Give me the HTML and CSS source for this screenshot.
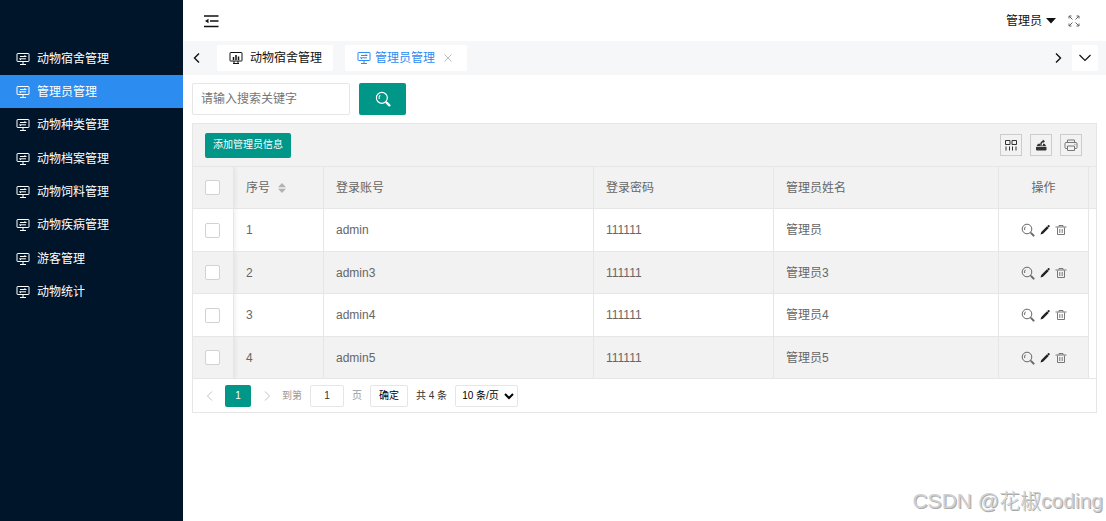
FILE: index.html
```
<!DOCTYPE html>
<html lang="zh-CN">
<head>
<meta charset="utf-8">
<title>管理员管理</title>
<meta name="viewport" content="width=device-width, initial-scale=1">
<link rel="stylesheet" href="styles.css">
</head>
<body>
<svg class="sprite" aria-hidden="true">
  <symbol id="i-screen" viewBox="0 0 14 14"><path d="M1.5 1.500h11q.5 0 .5.5v7q0 .5-.5.5h-11Q1 9.500 1 9V2q0-.5.5-.5zM7 9.500v3M4 12.500h6M4 4.500h6.500M3.500 6.800H10M8.500 3.500l1.500 1M5 8l-1.500-1.200"/></symbol>
  <symbol id="i-chart" viewBox="0 0 14 14"><path d="M1.500 1.500h11q.5 0 .5.5v7.500q0 .5-.5.5h-11Q1 10 1 9.500V2q0-.5.5-.5zM4 12.500h6M5 10v2M9 10v2"/><path d="M4.500 6v3M7 4v5M9.500 5.500v3.500" stroke-width="1.500"/></symbol>
  <symbol id="i-search" viewBox="0 0 14 14"><circle cx="6" cy="6" r="4.800"/><path d="M3.700 7Q3 4.900 4.600 3.700M9.300 9.300l1.500 1.500"/><path d="M10.400 10.400l2.200 2.200" stroke-width="2" stroke-linecap="round"/></symbol>
  <symbol id="i-edit" viewBox="0 0 12 12"><path d="M1.500 10.500l.8-2.500 5.700-5.700 1.700 1.700L4 9.700zM8.300 2l1-.9q.6-.3 1.200.3.600.600.2 1.200l-.9 1z" fill="currentColor" stroke="none"/></symbol>
  <symbol id="i-trash" viewBox="0 0 12 12"><path d="M.5 3h11M4 2.800V1.500h4v1.300M2.500 3.500v7h7v-7M4.800 5v4M7.200 5v4"/></symbol>
  <symbol id="i-left" viewBox="0 0 12 12"><path d="M8 1.500L3.500 6 8 10.500"/></symbol>
  <symbol id="i-right" viewBox="0 0 12 12"><path d="M4 1.500L8.500 6 4 10.500"/></symbol>
</svg>
<div class="app">
  <nav class="sidebar" aria-label="主菜单">
    <a class="nav-item" href="#"><svg class="icon"><use href="#i-screen"/></svg>动物宿舍管理</a>
    <a class="nav-item active" href="#" aria-current="page"><svg class="icon"><use href="#i-screen"/></svg>管理员管理</a>
    <a class="nav-item" href="#"><svg class="icon"><use href="#i-screen"/></svg>动物种类管理</a>
    <a class="nav-item" href="#"><svg class="icon"><use href="#i-screen"/></svg>动物档案管理</a>
    <a class="nav-item" href="#"><svg class="icon"><use href="#i-screen"/></svg>动物饲料管理</a>
    <a class="nav-item" href="#"><svg class="icon"><use href="#i-screen"/></svg>动物疾病管理</a>
    <a class="nav-item" href="#"><svg class="icon"><use href="#i-screen"/></svg>游客管理</a>
    <a class="nav-item" href="#"><svg class="icon"><use href="#i-screen"/></svg>动物统计</a>
  </nav>
  <div class="main">
    <header class="topbar">
      <button class="plain" aria-label="收起菜单"><svg class="icon icon-menu" viewBox="0 0 16 14"><path d="M1 2h14.500M7 7h8.500M1 12.500h14.500" stroke-width="1.600"/><path d="M5.500 4.800v4.400L2 7z" fill="currentColor" stroke="none"/></svg></button>
      <div class="account">
        <button class="plain user">管理员<svg class="icon-caret" viewBox="0 0 10 6"><path d="M0 0h10L5 5.500z" fill="currentColor"/></svg></button>
        <button class="plain" aria-label="全屏"><svg class="icon icon-full" viewBox="0 0 12 12"><path d="M1 3.500V1h2.500M1 1l3.500 3.500M8.500 1H11v2.500M11 1L7.500 4.500M1 8.500V11h2.500M1 11l3.500-3.500M8.500 11H11V8.500M11 11L7.500 7.500"/></svg></button>
      </div>
    </header>
    <div class="tabs">
      <button class="plain arrow" aria-label="向左"><svg class="icon"><use href="#i-left"/></svg></button>
      <button class="tab tab-first"><svg class="icon"><use href="#i-chart"/></svg>动物宿舍管理</button>
      <button class="tab tab-current"><svg class="icon"><use href="#i-screen"/></svg>管理员管理<svg class="icon-close" viewBox="0 0 10 10"><path d="M1.500 1.500l7 7M8.500 1.500l-7 7"/></svg></button>
      <button class="plain arrow arrow-end" aria-label="向右"><svg class="icon"><use href="#i-right"/></svg></button>
      <button class="tab-more" aria-label="更多"><svg class="icon-down" viewBox="0 0 14 10"><path d="M1.500 2L7 7.500 12.500 2"/></svg></button>
    </div>
    <main class="content">
      <form class="search">
        <input class="search-input" type="text" placeholder="请输入搜索关键字" aria-label="请输入搜索关键字">
        <button class="search-button" type="button" aria-label="搜索"><svg class="icon"><use href="#i-search"/></svg></button>
      </form>
      <section class="panel">
        <div class="toolbar">
          <button class="add">添加管理员信息</button>
          <div class="tools">
            <button class="tool" aria-label="筛选列"><svg class="icon" viewBox="0 0 14 14"><path d="M1.500 2.500h4.500v4H1.500zM8 2.500h4.500v4H8zM2 8.500v4M5.500 8.500v4M8.500 8.500v4M12 8.500v4"/></svg></button>
            <button class="tool" aria-label="导出"><svg class="icon" viewBox="0 0 14 14"><path d="M2 9h10.500v2.500q0 1-1 1H3q-1 0-1-1zM2.500 8.300L4 5.800h2v1.700h3V5.800h1.500l1.800 2.500z" fill="currentColor" stroke="none"/><path d="M7 7.500Q6.500 4 9.500 3.300" stroke-width="1.500"/><path d="M8.700 1.500L11 3.200 9 5z" fill="currentColor" stroke="none"/></svg></button>
            <button class="tool tool-print" aria-label="打印"><svg class="icon" viewBox="0 0 14 14"><path d="M3.500 4.500V2h7v2.500M3.500 10.500H2q-1 0-1-1V5.500q0-1 1-1h10q1 0 1 1v4q0 1-1 1h-1.500M3.500 8h7v4.500h-7zM10.500 6.300h1"/></svg></button>
          </div>
        </div>
        <table class="grid">
          <colgroup><col class="c-check"><col class="c-no"><col class="c-account"><col class="c-password"><col><col class="c-action"><col class="c-gutter"></colgroup>
          <thead>
            <tr><th class="check"><input type="checkbox" aria-label="全选"></th><th>序号<svg class="icon-sort" viewBox="0 0 8 10"><path d="M0 4.200L4 0l4 4.200zM0 5.800L4 10l4-4.200z" fill="currentColor"/></svg></th><th>登录账号</th><th>登录密码</th><th>管理员姓名</th><th class="action">操作</th><th class="gutter"></th></tr>
          </thead>
          <tbody>
            <tr><td class="check"><input type="checkbox" aria-label="选择 1"></td><td>1</td><td>admin</td><td>111111</td><td>管理员</td><td class="action"><div class="actions"><button class="plain" aria-label="查看"><svg class="icon"><use href="#i-search"/></svg></button><button class="plain edit" aria-label="编辑"><svg class="icon"><use href="#i-edit"/></svg></button><button class="plain trash" aria-label="删除"><svg class="icon"><use href="#i-trash"/></svg></button></div></td><td class="gutter"></td></tr>
            <tr><td class="check"><input type="checkbox" aria-label="选择 2"></td><td>2</td><td>admin3</td><td>111111</td><td>管理员3</td><td class="action"><div class="actions"><button class="plain" aria-label="查看"><svg class="icon"><use href="#i-search"/></svg></button><button class="plain edit" aria-label="编辑"><svg class="icon"><use href="#i-edit"/></svg></button><button class="plain trash" aria-label="删除"><svg class="icon"><use href="#i-trash"/></svg></button></div></td><td class="gutter"></td></tr>
            <tr><td class="check"><input type="checkbox" aria-label="选择 3"></td><td>3</td><td>admin4</td><td>111111</td><td>管理员4</td><td class="action"><div class="actions"><button class="plain" aria-label="查看"><svg class="icon"><use href="#i-search"/></svg></button><button class="plain edit" aria-label="编辑"><svg class="icon"><use href="#i-edit"/></svg></button><button class="plain trash" aria-label="删除"><svg class="icon"><use href="#i-trash"/></svg></button></div></td><td class="gutter"></td></tr>
            <tr><td class="check"><input type="checkbox" aria-label="选择 4"></td><td>4</td><td>admin5</td><td>111111</td><td>管理员5</td><td class="action"><div class="actions"><button class="plain" aria-label="查看"><svg class="icon"><use href="#i-search"/></svg></button><button class="plain edit" aria-label="编辑"><svg class="icon"><use href="#i-edit"/></svg></button><button class="plain trash" aria-label="删除"><svg class="icon"><use href="#i-trash"/></svg></button></div></td><td class="gutter"></td></tr>
          </tbody>
        </table>
        <div class="pager">
          <button class="plain step" aria-label="上一页"><svg class="icon"><use href="#i-left"/></svg></button>
          <button class="page" aria-current="page">1</button>
          <button class="plain step" aria-label="下一页"><svg class="icon"><use href="#i-right"/></svg></button>
          <label class="muted" for="page-no">到第</label>
          <input class="page-input" id="page-no" type="text" value="1">
          <span class="muted">页</span>
          <button class="confirm">确定</button>
          <span>共 4 条</span>
          <select class="page-size" aria-label="每页条数"><option>10 条/页</option><option>20 条/页</option></select>
        </div>
      </section>
    </main>
  </div>
</div>
<div class="watermark">CSDN @花椒coding</div>
</body>
</html>
```
FILE: styles.css
```
* { box-sizing: border-box; }
body {
  margin: 0;
  background: #fff;
  color: #666;
  font: 12px/18px "Liberation Sans", "Noto Sans CJK SC", sans-serif;
}
button, input, select { font: inherit; color: inherit; margin: 0; }
button { cursor: pointer; padding: 0; border: 0; }
svg { display: block; flex: none; fill: none; stroke: currentColor; stroke-width: 1; }
.sprite { position: absolute; width: 0; height: 0; }
.icon { width: 14px; height: 14px; }
.plain { background: none; display: flex; align-items: center; }
.app { display: flex; min-height: 100vh; }

.sidebar {
  flex: 0 0 183px;
  padding-top: 42px;
  background: #001529;
  display: grid;
  grid-template-rows: 33px 33px 34px 33px 33px 34px 33px 33px;
  align-content: start;
}
.nav-item {
  display: flex;
  align-items: center;
  gap: 7px;
  padding-left: 16px;
  color: #fff;
  text-decoration: none;
}
.nav-item.active { background: #2d8cf0; }

.main { flex: 1; min-width: 0; }
.topbar {
  height: 41px;
  padding: 0 26px 0 20px;
  display: flex;
  align-items: center;
  justify-content: space-between;
  color: #111;
}
.icon-menu { width: 16px; }
.account { display: flex; align-items: center; gap: 12px; }
.user { gap: 4px; }
.icon-caret { width: 10px; height: 6px; stroke: none; }
.icon-full { width: 12px; height: 12px; color: #666; }

.tabs {
  height: 34px;
  padding: 0 8px;
  display: flex;
  align-items: center;
  background: #f5f7f9;
  color: #111;
}
.arrow { width: 26px; }
.arrow .icon { width: 12px; height: 12px; stroke-width: 1.4; }
.arrow-end { margin-left: auto; width: 20px; }
.tab, .tab-more {
  height: 26px;
  background: #fff;
  border-radius: 2px;
  display: flex;
  align-items: center;
}
.tab-first { padding: 0 11px 0 12px; gap: 7px; }
.tab-current { margin-left: 12px; padding: 0 14px 0 12px; gap: 4px; color: #2d8cf0; }
.icon-close { width: 10px; height: 10px; margin-left: 4px; color: #bbb; }
.tab-more { width: 26px; justify-content: center; }
.icon-down { width: 14px; height: 10px; stroke-width: 1.2; }

.content { padding: 8px 9px; }
.search { display: flex; gap: 9px; }
.search-input {
  width: 158px;
  height: 32px;
  padding: 0 8px;
  border: 1px solid #e6e6e6;
  border-radius: 2px;
  background: #fff;
}
.search-input::placeholder { color: #757575; }
.search-button {
  width: 47px;
  height: 32px;
  display: flex;
  align-items: center;
  justify-content: center;
  background: #009688;
  color: #fff;
  border-radius: 2px;
}
.search-button .icon { width: 16px; height: 16px; }

.panel { margin-top: 8px; border: 1px solid #e6e6e6; }
.toolbar {
  height: 42px;
  padding: 0 14px 0 12px;
  display: flex;
  align-items: center;
  justify-content: space-between;
  background: #f2f2f2;
}
.add {
  height: 25px;
  padding: 0 8px;
  background: #009688;
  color: #fff;
  border-radius: 2px;
  font-size: 10px;
}
.tools { display: flex; gap: 8px; }
.tool {
  width: 22px;
  height: 22px;
  display: flex;
  align-items: center;
  justify-content: center;
  border: 1px solid #ccc;
  background: none;
  color: #333;
}
.tool-print { color: #777; }

.grid {
  width: 100%;
  table-layout: fixed;
  border-collapse: separate;
  border-spacing: 0;
  border-top: 1px solid #e6e6e6;
}
.c-check { width: 41px; }
.c-no { width: 90px; }
.c-account { width: 270px; }
.c-password { width: 180px; }
.c-action { width: 90px; }
.c-gutter { width: 7px; }
.grid th, .grid td {
  height: 42px;
  padding: 0 12px;
  border-right: 1px solid #e6e6e6;
  border-bottom: 1px solid #e6e6e6;
  text-align: left;
  font-weight: normal;
}
.grid tbody tr:nth-child(odd) td { height: 43px; }
.grid thead tr, .grid tbody tr:nth-child(even) { background: #f2f2f2; }
.grid .check { box-shadow: 1px 0 5px rgba(0, 0, 0, 0.08); clip-path: inset(0 -8px 0 0); }
.grid .action { padding: 0; text-align: center; }
.grid .gutter { padding: 0; border-right: 0; }
.grid td.gutter { background: #fff; border-bottom-color: #fff; }
.grid tr:last-child .gutter { border-bottom-color: #e6e6e6; }
.check input {
  appearance: none;
  display: block;
  width: 15px;
  height: 15px;
  border: 1px solid #d2d2d2;
  border-radius: 2px;
  background: #fff;
}
.icon-sort { display: inline-block; width: 8px; height: 10px; margin-left: 8px; vertical-align: middle; color: #b2b2b2; stroke: none; }
.actions { display: flex; align-items: center; justify-content: center; gap: 4px; }
.edit { color: #222; }
.edit .icon, .trash .icon { width: 12px; height: 12px; }
.trash { color: #777; }

.pager {
  height: 33px;
  padding: 0 9px;
  display: flex;
  align-items: center;
  gap: 8px;
  font-size: 10px;
  color: #333;
}
.step { color: #c2c2c2; width: 15px; justify-content: center; }
.step .icon { width: 12px; height: 12px; }
.page, .page-input, .confirm, .page-size { height: 22px; border-radius: 2px; }
.page { width: 26px; background: #009688; color: #fff; }
.muted { color: #999; }
.page-input { width: 34px; text-align: center; border: 1px solid #e6e6e6; }
.confirm { width: 38px; border: 1px solid #e6e6e6; background: #fff; color: #000; }
.page-size { width: 63px; padding: 0 2px; border: 1px solid #e6e6e6; background: #fff; color: #000; }

.watermark {
  position: absolute;
  right: 3px;
  bottom: 4px;
  font: 300 21px/32px "Liberation Sans", "Noto Sans CJK SC", sans-serif;
  color: #d0d0d0;
  text-shadow: 1px 1px 0 #aaa;
  pointer-events: none;
}
```
